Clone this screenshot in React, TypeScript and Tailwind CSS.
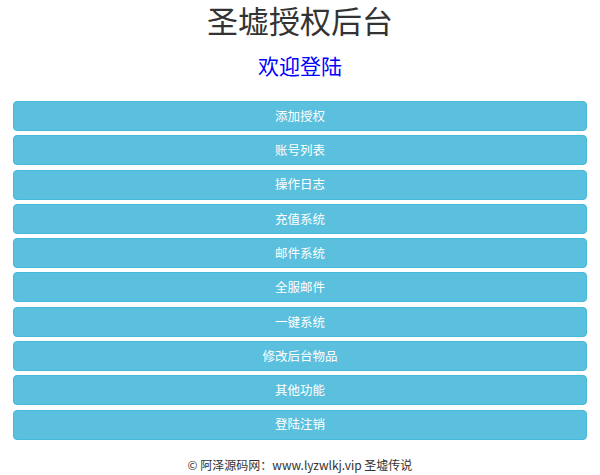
import React from "react";

const items = ["添加授权", "账号列表", "操作日志", "充值系统", "邮件系统", "全服邮件", "一键系统", "修改后台物品", "其他功能", "登陆注销"];

export default function App() {
  return (
    <div
      className="w-[600px] h-[475px] bg-white overflow-hidden"
      style={{ fontFamily: '"Noto Sans CJK SC", "Noto Sans", "Liberation Sans", sans-serif' }}
    >
      <div className="h-[40px] flex items-center justify-center text-[31px] text-[#333333] leading-[40px]">
        圣墟授权后台
      </div>
      <div className="mt-[10px] h-[30px] flex items-center justify-center text-[21px] text-[#0000ff] leading-[30px]">
        欢迎登陆
      </div>
      <div className="mt-[21px] px-[13px] flex flex-col gap-[4.3px]">
        {items.map((t) => (
          <div
            key={t}
            className="h-[30px] flex items-center justify-center rounded-[4px] bg-[#5bc0de] border border-[#46b8da] text-white text-[12.5px] leading-none"
          >
            {t}
          </div>
        ))}
      </div>
      <div
        className="mt-[15px] h-[20px] flex items-center justify-center text-[12px] text-[#333333] leading-[20px]"
        style={{ fontFamily: '"Noto Sans CJK SC", "Liberation Sans", sans-serif' }}
      >
        © 阿泽源码网：www.lyzwlkj.vip 圣墟传说
      </div>
    </div>
  );
}
